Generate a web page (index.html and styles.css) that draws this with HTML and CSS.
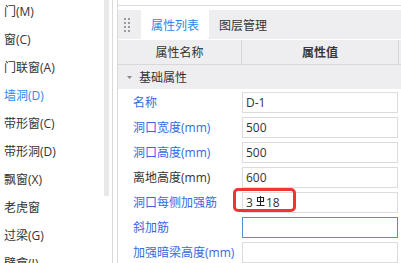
FILE: index.html
```html
<!DOCTYPE html>
<html lang="zh-CN">
<head>
<meta charset="utf-8">
<title>属性列表</title>
<link rel="stylesheet" href="styles.css">
</head>
<body>
<div class="app">
  <div class="sidebar">
    <ul class="list">
      <li>门(M)</li>
      <li>窗(C)</li>
      <li>门联窗(A)</li>
      <li class="active">墙洞(D)</li>
      <li>带形窗(C)</li>
      <li>带形洞(D)</li>
      <li>飘窗(X)</li>
      <li>老虎窗</li>
      <li>过梁(G)</li>
      <li>壁龛(I)</li>
    </ul>
  </div>
  <div class="scrollbar"><div class="thumb"></div></div>
  <div class="splitter"></div>
  <div class="main">
    <div class="toppanel"></div>
    <div class="tabbar">
      <svg class="grip" width="6" height="14" viewBox="0 0 6 14">
        <rect x="0" y="0" width="2" height="2"/><rect x="4" y="0" width="2" height="2"/>
        <rect x="0" y="4" width="2" height="2"/><rect x="4" y="4" width="2" height="2"/>
        <rect x="0" y="8" width="2" height="2"/><rect x="4" y="8" width="2" height="2"/>
        <rect x="0" y="12" width="2" height="2"/><rect x="4" y="12" width="2" height="2"/>
      </svg>
      <div class="tab active">属性列表</div>
      <div class="tab">图层管理</div>
    </div>
    <div class="thead">
      <div class="th">属性名称</div>
      <div class="th strong">属性值</div>
      <div class="th"></div>
    </div>
    <div class="group">
      <svg class="caret" width="5" height="3" viewBox="0 0 5 3"><path d="M0 0H5L2.5 3Z"/></svg>
      <span>基础属性</span>
    </div>
    <div class="rows">
      <div class="row"><div class="label blue">名称</div><div class="value"><div class="input">D-1</div></div></div>
      <div class="row"><div class="label blue">洞口宽度(mm)</div><div class="value"><div class="input">500</div></div></div>
      <div class="row"><div class="label blue">洞口高度(mm)</div><div class="value"><div class="input">500</div></div></div>
      <div class="row"><div class="label">离地高度(mm)</div><div class="value"><div class="input">600</div></div></div>
      <div class="row"><div class="label blue">洞口每侧加强筋</div><div class="value">
        <div class="input">3<svg class="rebar" width="9" height="10" viewBox="0 0 9 10"><path d="M1.5 1.5H7.5V5.5H1.5Z M4.5 0V9.5 M0.5 9.5H8.5"/></svg>18</div>
        <div class="highlight"></div>
      </div></div>
      <div class="row"><div class="label blue">斜加筋</div><div class="value"><div class="input focus"></div></div></div>
      <div class="row"><div class="label blue">加强暗梁高度(mm)</div><div class="value"><div class="input"></div></div></div>
    </div>
  </div>
</div>
</body>
</html>
```

FILE: styles.css
```css
* { box-sizing: border-box; }
html, body {
  margin: 0;
  padding: 0;
  width: 401px;
  height: 263px;
  overflow: hidden;
  background: #fff;
  font-family: "Open Sans", "Noto Sans CJK SC", sans-serif;
  font-size: 12px;
  color: #333;
}
.app {
  display: flex;
  height: 263px;
  overflow: hidden;
}
.sidebar {
  width: 104px;
  flex: none;
  overflow: hidden;
}
.list {
  list-style: none;
  margin: -2px 0 0 0;
  padding: 0 0 0 4px;
}
.list li {
  height: 28px;
  line-height: 28px;
  white-space: nowrap;
}
.list li.active { color: #2a88ee; }
.scrollbar {
  width: 5px;
  flex: none;
}
.thumb {
  height: 196px;
  background: #e8e8e8;
}
.splitter {
  width: 5px;
  margin-left: 3px;
  flex: none;
  border-left: 1px solid #dadada;
}
.main {
  flex: 1;
  min-width: 0;
  border-left: 1px solid #dadada;
  display: flex;
  flex-direction: column;
}
.toppanel {
  height: 6px;
  border-bottom: 1px solid #dcdcdc;
  margin-bottom: 4px;
  flex: none;
}
.tabbar {
  height: 29px;
  flex: none;
  background: #eeeef0;
  display: flex;
  align-items: stretch;
}
.grip {
  fill: #9a9a9a;
  margin: 8px 11px 0 6px;
}
.tab {
  display: flex;
  align-items: center;
  padding: 0 10px;
  color: #333;
}
.tab.active {
  background: #fff;
  color: #2a88ee;
}
.thead {
  margin-top: 1px;
  height: 25px;
  flex: none;
  display: grid;
  grid-template-columns: 124px 157px 1fr;
  background: #eeeef0;
  border-bottom: 1px solid #d8d8d8;
}
.th {
  display: flex;
  align-items: center;
  justify-content: center;
  border-right: 1px solid #d8d8d8;
}
.th:last-child { border-right: none; }
.th.strong { font-weight: 700; color: #3a3a3a; }
.group {
  height: 24px;
  flex: none;
  background: #eeeef0;
  display: flex;
  align-items: center;
}
.caret {
  fill: #8a8a8a;
  margin: 0 7px 0 9px;
}
.rows { flex: none; }
.row {
  height: 25px;
  display: grid;
  grid-template-columns: 124px 1fr;
}
.label {
  padding-left: 15px;
  display: flex;
  align-items: center;
  white-space: nowrap;
}
.label.blue { color: #3569e4; }
.value { position: relative; }
.input {
  margin-top: 3px;
  width: 156px;
  height: 21px;
  border: 1px solid #dcdcdc;
  background: #fff;
  padding: 0 3px;
  display: flex;
  align-items: center;
}
.input.focus { border-color: #5b8ad8; }
.rebar {
  fill: none;
  stroke: #222;
  stroke-width: 1.1;
  margin: -3px 1px 0 3px;
}
.highlight {
  position: absolute;
  left: -9px;
  top: -1px;
  width: 63px;
  height: 24px;
  border: 3px solid #f03434;
  border-radius: 5px;
}
```
